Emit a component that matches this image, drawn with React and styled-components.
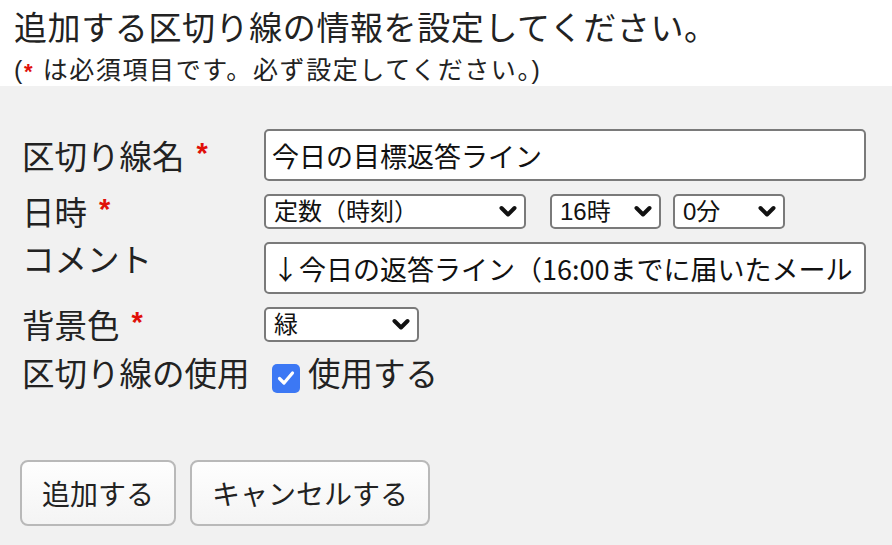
import React from "react";
import styled, { createGlobalStyle } from "styled-components";

const GlobalStyle = createGlobalStyle`
  html, body {
    margin: 0;
    padding: 0;
    background: #f1f1f1;
  }
  body {
    font-family: "Liberation Sans", "Noto Sans CJK JP", sans-serif;
    color: #222;
  }
`;

const Page = styled.div`
  width: 892px;
  height: 545px;
  overflow: hidden;
`;

const Header = styled.div`
  background: #fff;
  padding: 9px 14px 0;
  height: 77px;
`;

const Title = styled.div`
  font-size: 33px;
  line-height: 40px;
  letter-spacing: 0.6px;
  color: #222;
`;

const Note = styled.div`
  font-size: 25px;
  line-height: 32px;
  letter-spacing: 1.6px;
  margin-top: 5px;
`;

const Star = styled.span`
  color: #e0100a;
  font-size: ${(p) => (p.$small ? "22px" : "29px")};
  font-weight: bold;
  margin-left: ${(p) => (p.$small ? "0" : "12px")};
  vertical-align: ${(p) => (p.$small ? "baseline" : "6px")};
`;

const Body = styled.div`
  padding: 43px 0 0 22px;
`;

const Form = styled.div`
  display: grid;
  grid-template-columns: 242px 1fr;
  row-gap: 13px;
  align-items: center;
`;

const Label = styled.div`
  font-size: 32.5px;
  line-height: 30px;
  align-self: ${(p) => (p.$top ? "start" : "center")};
  padding-top: ${(p) => (p.$top ? "4px" : "0")};
  white-space: nowrap;
`;

const Field = styled.div`
  display: flex;
  align-items: center;
`;

const TextInput = styled.input`
  box-sizing: border-box;
  width: 602px;
  height: 52px;
  border: 2px solid #7a7a7a;
  border-radius: 5px;
  background: #fff;
  padding: 0 6px;
  font-family: "Noto Sans CJK JP", "Liberation Sans", sans-serif;
  font-size: 27px;
  color: #111;
  outline: none;
`;

const SelectBox = styled.div`
  position: relative;
  width: ${(p) => p.$w}px;
  height: 35px;
  margin-right: ${(p) => p.$mr || 0}px;
`;

const Select = styled.select`
  box-sizing: border-box;
  appearance: none;
  width: 100%;
  height: 100%;
  border: 2px solid #7a7a7a;
  border-radius: 5px;
  background: #fff;
  padding: 0 0 0 8px;
  font-family: "Liberation Sans", "Noto Sans CJK JP", sans-serif;
  font-size: 24px;
  color: #111;
  outline: none;
`;

const Chevron = styled.svg`
  position: absolute;
  right: 9px;
  top: 11px;
  pointer-events: none;
`;

const CheckLabel = styled.label`
  display: flex;
  align-items: center;
  font-size: 32.5px;
  line-height: 40px;
  margin-left: 8px;
`;

const Box = styled.span`
  width: 28px;
  height: 29px;
  border-radius: 5px;
  background: #3c78f4;
  display: flex;
  align-items: center;
  justify-content: center;
  margin: 6px 8px 0 0;
`;

const Buttons = styled.div`
  display: flex;
  gap: 14px;
  margin-top: 65px;
  margin-left: -2px;
`;

const Button = styled.button`
  box-sizing: border-box;
  height: 66px;
  padding: 0 20px;
  border: 2px solid #b9b9b9;
  border-radius: 8px;
  background: linear-gradient(#fefefe, #f4f4f4);
  font-family: "Liberation Sans", "Noto Sans CJK JP", sans-serif;
  font-size: 28px;
  color: #222;
`;

const Dropdown = ({ w, mr, value, options }) => (
  <SelectBox $w={w} $mr={mr}>
    <Select defaultValue={value}>
      {options.map((o) => (
        <option key={o}>{o}</option>
      ))}
    </Select>
    <Chevron width="18" height="13" viewBox="0 0 18 13">
      <path d="M2.5 3 L9 9.5 L15.5 3" fill="none" stroke="#111" strokeWidth="4" strokeLinecap="round" strokeLinejoin="round" />
    </Chevron>
  </SelectBox>
);

export default function App() {
  return (
    <Page>
      <GlobalStyle />
      <Header>
        <Title>追加する区切り線の情報を設定してください。</Title>
        <Note>
          (<Star $small>*</Star> は必須項目です。必ず設定してください。)
        </Note>
      </Header>
      <Body>
        <Form>
          <Label>
            区切り線名<Star>*</Star>
          </Label>
          <Field>
            <TextInput defaultValue="今日の目標返答ライン" />
          </Field>

          <Label>
            日時<Star>*</Star>
          </Label>
          <Field>
            <Dropdown w={262} mr={24} value="定数（時刻）" options={["定数（時刻）", "相対（時間）"]} />
            <Dropdown w={111} mr={12} value="16時" options={["15時", "16時", "17時"]} />
            <Dropdown w={112} value="0分" options={["0分", "30分"]} />
          </Field>

          <Label $top>コメント</Label>
          <Field>
            <TextInput defaultValue="↓今日の返答ライン（16:00までに届いたメール" />
          </Field>

          <Label>
            背景色<Star>*</Star>
          </Label>
          <Field>
            <Dropdown w={155} value="緑" options={["緑", "赤", "青"]} />
          </Field>

          <Label>区切り線の使用</Label>
          <Field>
            <CheckLabel>
              <Box>
                <svg width="18" height="16" viewBox="0 0 18 16">
                  <path d="M2.5 8.5 L7 13 L15.5 3" fill="none" stroke="#fff" strokeWidth="3.2" strokeLinecap="round" strokeLinejoin="round" />
                </svg>
              </Box>
              使用する
            </CheckLabel>
          </Field>
        </Form>
        <Buttons>
          <Button>追加する</Button>
          <Button>キャンセルする</Button>
        </Buttons>
      </Body>
    </Page>
  );
}
